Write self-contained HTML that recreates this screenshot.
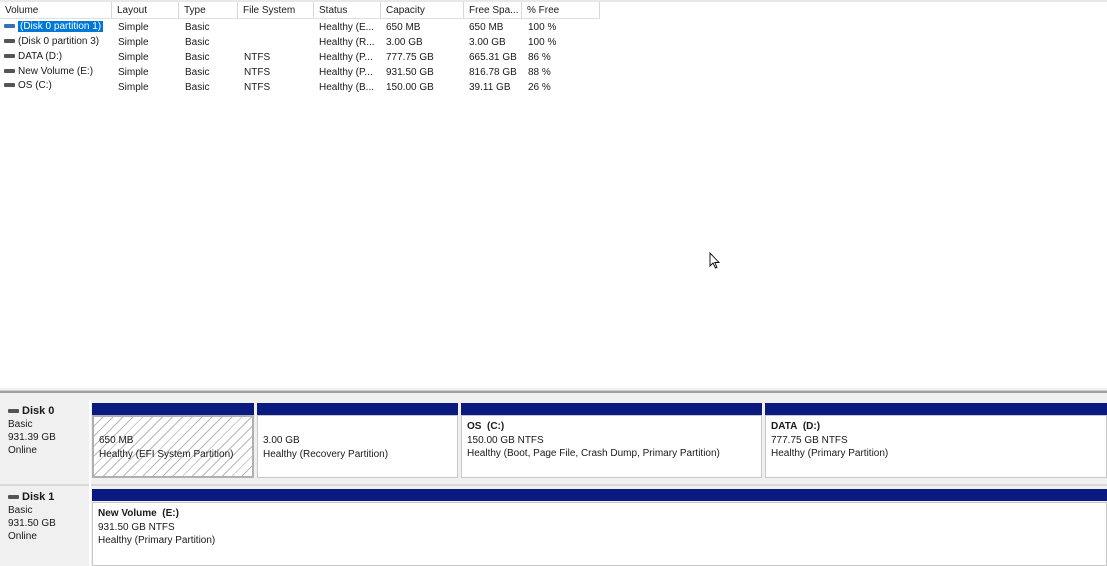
<!DOCTYPE html>
<html><head><style>
*{margin:0;padding:0;box-sizing:border-box}
body{width:1107px;height:566px;overflow:hidden;background:#fff;font-family:"Liberation Sans",sans-serif;font-size:10px;color:#1a1a1a;position:relative}
.a{position:absolute;white-space:nowrap}
.hd{position:absolute;top:2px;height:16px;border-right:1px solid #d8d8d8;padding-left:5px;line-height:17px}
.ic{display:inline-block;width:11px;height:4px;background:#555;vertical-align:middle;margin-right:3px;border-radius:1px}
.bar{position:absolute;background:#0a1a80;height:12px}
.box{position:absolute;background:#fff;border:1px solid #c8c8c8;padding:4px 0 0 5px;line-height:13.5px}
.lbl{position:absolute;left:0;width:89px;background:#f0f0f0;padding:5px 0 0 8px;line-height:13px}
</style></head><body>
<div class="a" style="left:0;top:0;width:1107px;height:2px;background:#e8e8e8"></div>
<div class="a" style="left:0;top:18px;width:600px;height:1px;background:#e0e0e0"></div>
<div class="hd" style="left:0;width:112px">Volume</div>
<div class="hd" style="left:112px;width:67px">Layout</div>
<div class="hd" style="left:179px;width:59px">Type</div>
<div class="hd" style="left:238px;width:76px">File System</div>
<div class="hd" style="left:314px;width:67px">Status</div>
<div class="hd" style="left:381px;width:83px">Capacity</div>
<div class="hd" style="left:464px;width:58px">Free Spa...</div>
<div class="hd" style="left:522px;width:78px">% Free</div>

<div class="a" style="left:4px;top:19px;line-height:15px"><span class="ic" style="background:#3a6fb0"></span><span style="background:#0078d7;color:#fff;padding:0 2px">(Disk 0 partition 1)</span></div>
<div class="a" style="left:4px;top:34px;line-height:15px"><span class="ic"></span>(Disk 0 partition 3)</div>
<div class="a" style="left:4px;top:49px;line-height:15px"><span class="ic"></span>DATA (D:)</div>
<div class="a" style="left:4px;top:64px;line-height:15px"><span class="ic"></span>New Volume (E:)</div>
<div class="a" style="left:4px;top:78px;line-height:15px"><span class="ic"></span>OS (C:)</div>

<div class="a" style="left:118px;top:20px;line-height:15px">Simple<br>Simple<br>Simple<br>Simple<br>Simple</div>
<div class="a" style="left:185px;top:20px;line-height:15px">Basic<br>Basic<br>Basic<br>Basic<br>Basic</div>
<div class="a" style="left:244px;top:20px;line-height:15px"><br><br>NTFS<br>NTFS<br>NTFS</div>
<div class="a" style="left:319px;top:20px;line-height:15px">Healthy (E...<br>Healthy (R...<br>Healthy (P...<br>Healthy (P...<br>Healthy (B...</div>
<div class="a" style="left:386px;top:20px;line-height:15px">650 MB<br>3.00 GB<br>777.75 GB<br>931.50 GB<br>150.00 GB</div>
<div class="a" style="left:469px;top:20px;line-height:15px">650 MB<br>3.00 GB<br>665.31 GB<br>816.78 GB<br>39.11 GB</div>
<div class="a" style="left:528px;top:20px;line-height:15px">100 %<br>100 %<br>86 %<br>88 %<br>26 %</div>

<svg class="a" style="left:709px;top:252px" width="12" height="18" viewBox="0 0 12 18"><path d="M1 1 L1 14 L4 11 L6.5 16 L8 15.3 L5.8 10.5 L10 10.5 Z" fill="#fff" stroke="#000" stroke-width="0.9"/></svg>

<div class="a" style="left:0;top:388px;width:1107px;height:178px;background:#f0f0f0"></div>
<div class="a" style="left:0;top:390px;width:1107px;height:3px;background:#a0a0a0;border-top:1px solid #d0d0d0"></div>

<div class="lbl" style="top:400px;height:83px"><b style="font-size:11px"><span class="ic"></span>Disk 0</b><br>Basic<br>931.39 GB<br>Online</div>
<div class="a" style="left:0;top:484px;width:1107px;height:2px;background:#d8d8d8"></div>
<div class="lbl" style="top:486px;height:80px"><b style="font-size:11px"><span class="ic"></span>Disk 1</b><br>Basic<br>931.50 GB<br>Online</div>
<div class="a" style="left:89px;top:400px;width:2px;height:166px;background:#fff"></div>

<div class="bar" style="left:92px;top:403px;width:162px"></div>
<div class="bar" style="left:257px;top:403px;width:201px"></div>
<div class="bar" style="left:461px;top:403px;width:301px"></div>
<div class="bar" style="left:765px;top:403px;width:342px"></div>

<div class="box" style="left:92px;top:415px;width:162px;height:63px;border:2px solid #b0b0b0;background:repeating-linear-gradient(135deg,#fff 0 6px,#b8b8b8 6px 7px);padding-top:17px">650 MB<br>Healthy (EFI System Partition)</div>
<div class="box" style="left:257px;top:415px;width:201px;height:63px;padding-top:18px">3.00 GB<br>Healthy (Recovery Partition)</div>
<div class="box" style="left:461px;top:415px;width:301px;height:63px"><b>OS&nbsp; (C:)</b><br>150.00 GB NTFS<br>Healthy (Boot, Page File, Crash Dump, Primary Partition)</div>
<div class="box" style="left:765px;top:415px;width:342px;height:63px"><b>DATA&nbsp; (D:)</b><br>777.75 GB NTFS<br>Healthy (Primary Partition)</div>

<div class="bar" style="left:92px;top:489px;width:1015px"></div>
<div class="box" style="left:92px;top:502px;width:1015px;height:64px"><b>New Volume&nbsp; (E:)</b><br>931.50 GB NTFS<br>Healthy (Primary Partition)</div>
</body></html>
